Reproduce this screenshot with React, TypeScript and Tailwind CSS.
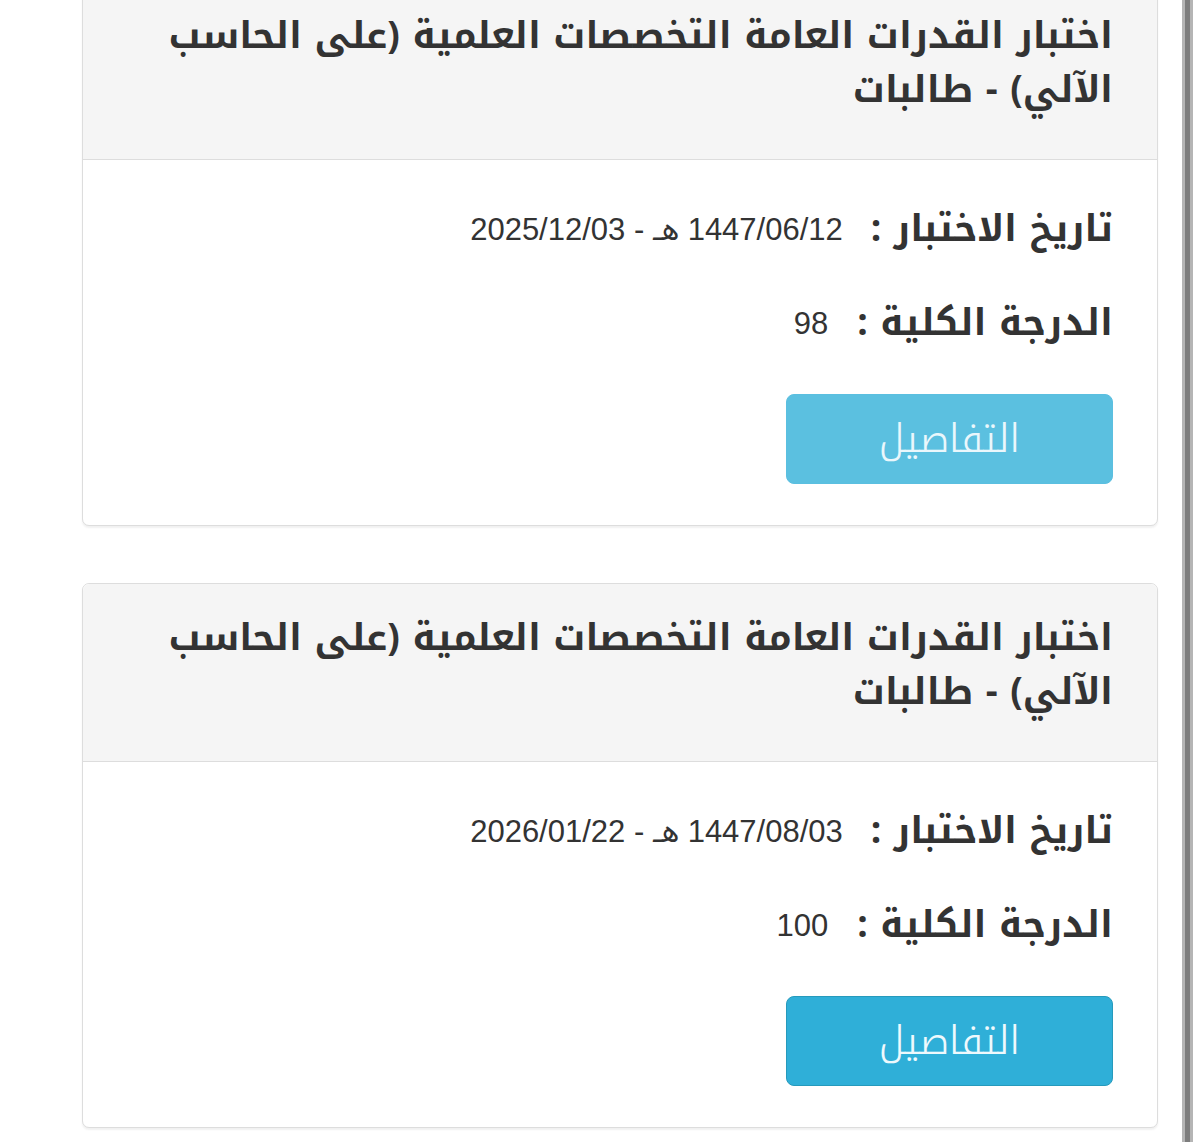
const exams = [
  {
    title: 'اختبار القدرات العامة التخصصات العلمية (على الحاسب الآلي) - طالبات',
    date: '1447/06/12 هـ - 2025/12/03',
    score: '98',
    active: false,
  },
  {
    title: 'اختبار القدرات العامة التخصصات العلمية (على الحاسب الآلي) - طالبات',
    date: '1447/08/03 هـ - 2026/01/22',
    score: '100',
    active: true,
  },
];

const arabic = "font-['Noto_Kufi_Arabic','Noto_Sans_Arabic','DejaVu_Sans',sans-serif]";
const value = "font-['Liberation_Sans','Noto_Sans_Arabic','DejaVu_Sans',sans-serif]";

function ExamCard({ exam }: { exam: (typeof exams)[number] }) {
  return (
    <div className="rounded-[7px] border border-[#dddddd] bg-white shadow-[0_2px_2px_rgba(0,0,0,0.06)]">
      {/* heading */}
      <div className="rounded-t-[7px] border-b border-[#dddddd] bg-[#f5f5f5] pl-[40px] pr-[44px] pt-[27px] pb-[42px]">
        <h3 className={`${arabic} max-w-[975px] text-[37px] font-bold leading-[54px] text-[#333333]`}>{exam.title}</h3>
      </div>

      {/* body */}
      <div className="pr-[44px] pl-[40px] pt-[43px] pb-[41px]">
        <div className="flex h-[54px] items-center gap-[28px]">
          <span className={`${arabic} text-[37px] font-bold text-[#333333]`}>تاريخ الاختبار :</span>
          <span className={`${value} text-[31px] text-[#333333]`}>{exam.date}</span>
        </div>
        <div className="mt-[40px] flex h-[54px] items-center gap-[29px]">
          <span className={`${arabic} text-[37px] font-bold text-[#333333]`}>الدرجة الكلية :</span>
          <span className={`${value} text-[31px] text-[#333333]`}>{exam.score}</span>
        </div>
        <button
          className={`${arabic} mt-[43px] flex h-[90px] w-[327px] items-center justify-center rounded-[8px] border text-[39px] font-light ${
            exam.active
              ? 'border-[#269abc] bg-[#2fafd8] text-[#eef9fd]'
              : 'border-[#5bbfe0] bg-[#5bc0e0] text-[#eaf7fc]'
          }`}
        >
          التفاصيل
        </button>
      </div>
    </div>
  );
}

export default function App() {
  return (
    <div dir="rtl" className="flex h-[1142px] overflow-hidden bg-white">
      {/* page scrollbar edge */}
      <div className="w-[7px] shrink-0" />
      <div className="w-[11px] shrink-0 border-x-[3px] border-[#b5b5b5] bg-[#7d7d7d]" />
      <main className="flex-1 pr-[24px] pl-[82px]">
        <div className="-mt-[19px] flex flex-col gap-[57px]">
          {exams.map((exam, i) => (
            <ExamCard key={i} exam={exam} />
          ))}
        </div>
      </main>
    </div>
  );
}
